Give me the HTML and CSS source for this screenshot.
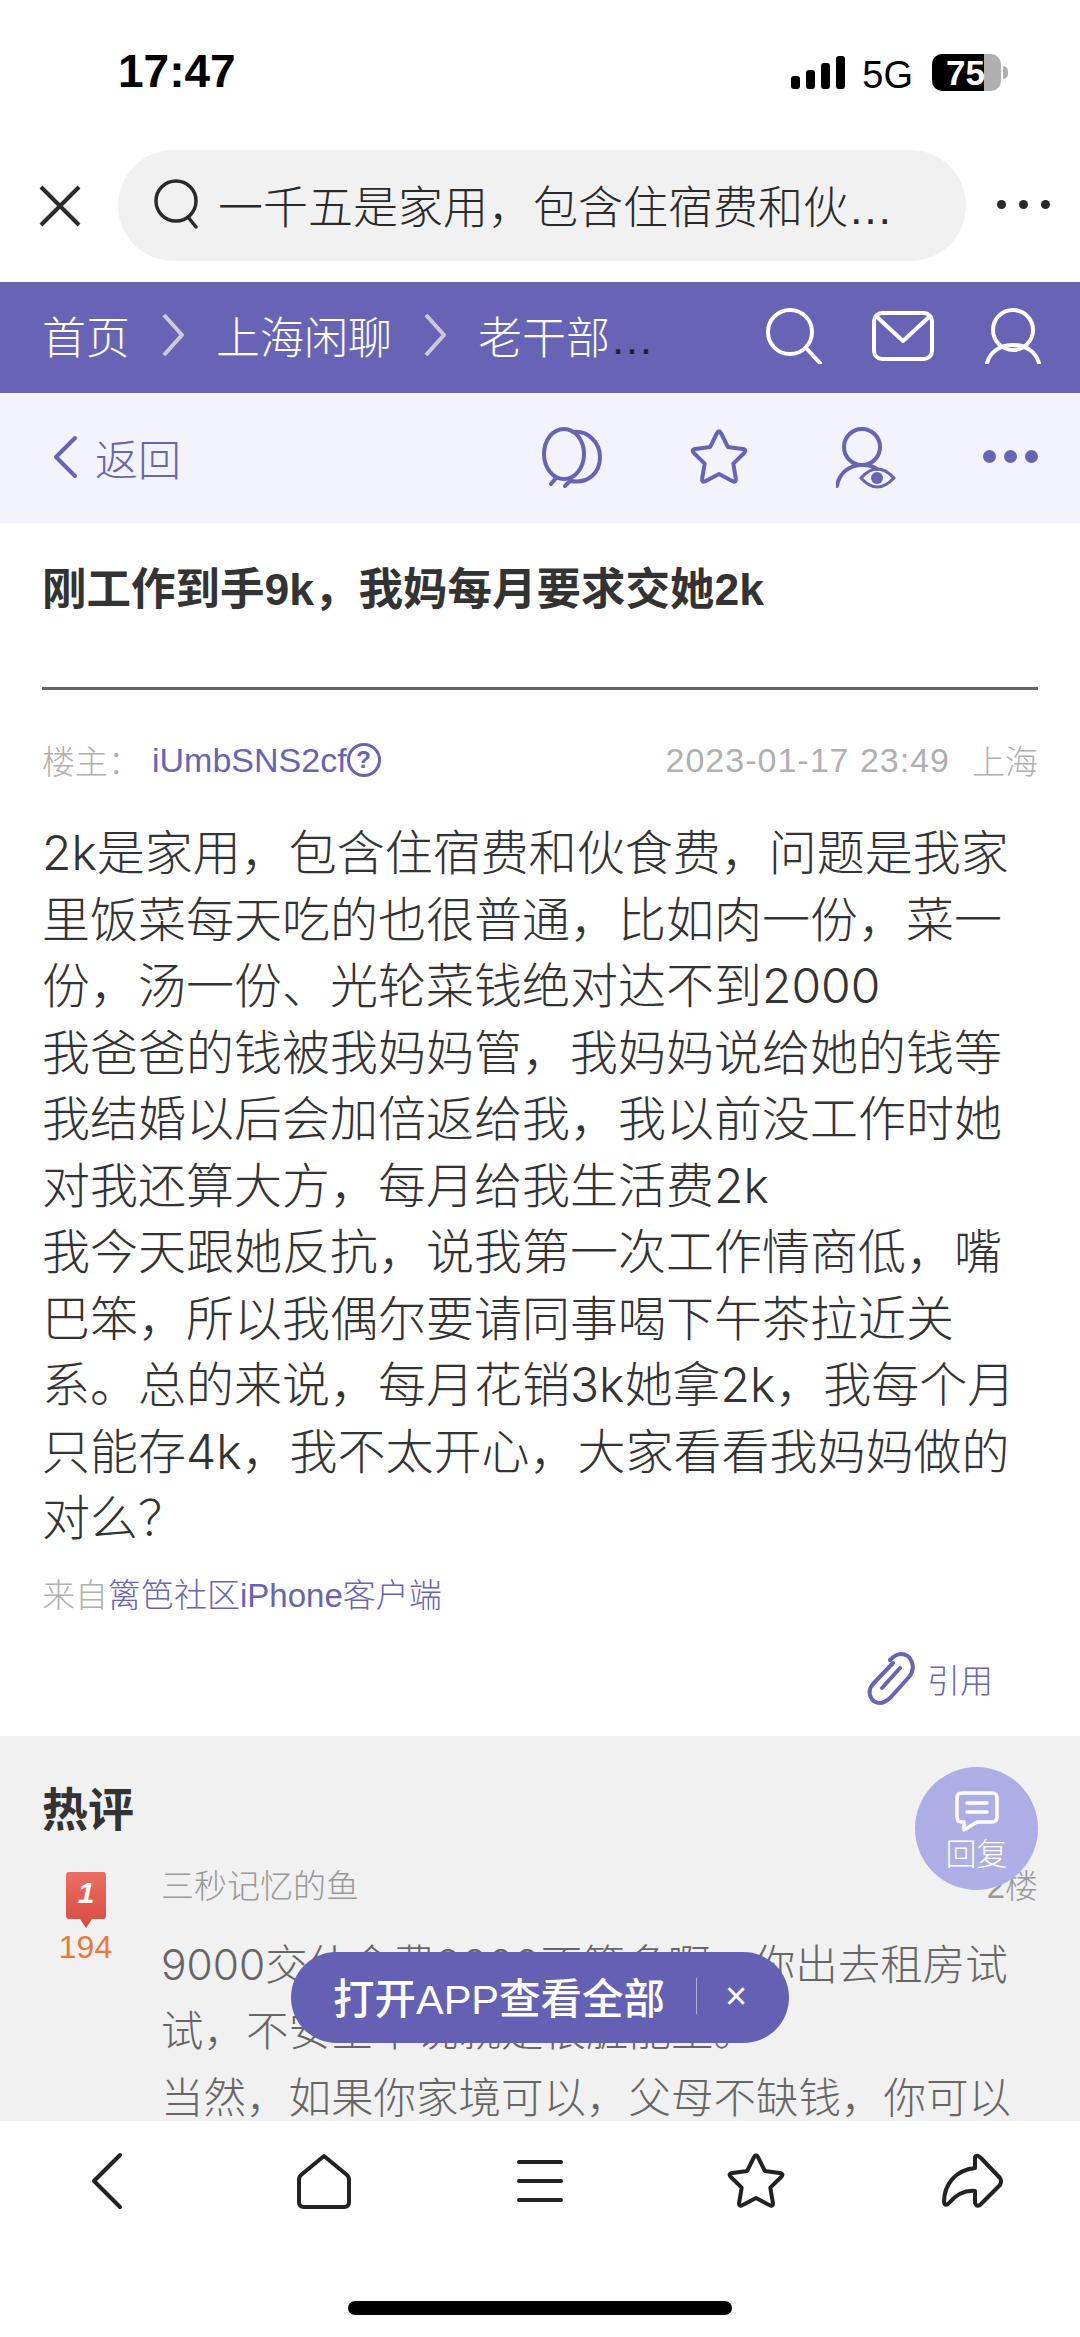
FILE: index.html
```html
<!DOCTYPE html>
<html lang="zh-CN">
<head>
    <meta charset="UTF-8">
    <meta name="viewport" content="width=device-width, initial-scale=1.0">
    <title>刚工作到手9k，我妈每月要求交她2k</title>
    <link rel="stylesheet" href="styles.css">
</head>
<body>

    <svg class="defs" width="0" height="0">
        <symbol id="star" viewBox="0 0 60 60">
            <path d="M27.8 6.5Q30 2 32.2 6.5L38.8 19.9 53.5 22Q58.5 22.7 54.9 26.2L44.3 36.6 46.8 51.4Q47.6 56.3 43.2 54L30 47 16.8 54Q12.4 56.3 13.2 51.4L15.7 36.6 5.1 26.2Q1.5 22.7 6.5 22L21.2 19.9Z"/>
        </symbol>
    </svg>

    <div class="page">

        <div class="status">
            <span class="time">17:47</span>
            <div class="status-right">
                <div class="signal">
                    <i class="bar1"></i><i class="bar2"></i><i class="bar3"></i><i class="bar4"></i>
                </div>
                <span class="net">5G</span>
                <div class="battery"><span>75</span></div>
                <i class="nub"></i>
            </div>
        </div>

        <div class="browser">
            <svg class="close" width="44" height="44" viewBox="0 0 44 44"><path d="M3 3 41 41M41 3 3 41"/></svg>
            <div class="search">
                <svg width="46" height="50" viewBox="0 0 46 50"><circle cx="22" cy="22" r="20"/><path d="M34 38 42 48"/></svg>
                <span>一千五是家用，包含住宿费和伙…</span>
            </div>
            <div class="more"><i></i><i></i><i></i></div>
        </div>

        <div class="nav">
            <div class="crumbs">
                <span>首页</span>
                <svg class="chev" width="24" height="44" viewBox="0 0 24 44"><path d="M3 2 21 22 3 42"/></svg>
                <span>上海闲聊</span>
                <svg class="chev" width="24" height="44" viewBox="0 0 24 44"><path d="M3 2 21 22 3 42"/></svg>
                <span>老干部<em>…</em></span>
            </div>
            <div class="nav-icons">
                <svg width="56" height="56" viewBox="0 0 56 56"><circle cx="24" cy="24" r="22"/><path d="M40 40 54 55"/></svg>
                <svg width="62" height="50" viewBox="0 0 62 50"><rect x="2" y="2" width="58" height="46" rx="8"/><path d="M5 6 31 30 57 6"/></svg>
                <svg width="58" height="56" viewBox="0 0 58 56"><circle cx="29" cy="22" r="20"/><path d="M3 55C6 44 16 37 29 37S52 44 55 55"/></svg>
            </div>
        </div>

        <div class="subnav">
            <svg class="back-arrow" width="26" height="44" viewBox="0 0 26 44"><path d="M23 3 4 22 23 41"/></svg>
            <span class="back">返回</span>
            <div class="sub-icons">
                <svg width="62" height="64" viewBox="0 0 62 64"><ellipse cx="24" cy="29" rx="20" ry="25"/><path d="M33 7C48 5 60 18 60 32 60 48 48 59 31 56M16 53 11 59M30 56 25 61"/></svg>
                <svg class="star" width="60" height="60"><use href="#star"/></svg>
                <svg width="60" height="64" viewBox="0 0 60 64"><circle cx="26" cy="22" r="18"/><path d="M1 61C3 48 14 39 28 40 34 40 38 42 41 44"/><path class="thin" d="M25 53Q41 35 58 53 41 71 25 53Z"/><circle class="solid" cx="41" cy="53" r="6"/></svg>
                <div class="sub-dots"><i></i><i></i><i></i></div>
            </div>
        </div>

        <div class="post">
            <h1 class="post-title">刚工作到手9k，我妈每月要求交她2k</h1>
            <div class="meta">
                <span class="owner">楼主：</span>
                <span class="author">iUmbSNS2cf</span>
                <span class="help">?</span>
                <span class="date">2023-01-17 23:49</span>
                <span class="place">上海</span>
            </div>
            <p class="post-body">2k是家用，包含住宿费和伙食费，问题是我家<br>里饭菜每天吃的也很普通，比如肉一份，菜一<br>份，汤一份、光轮菜钱绝对达不到2000<br>我爸爸的钱被我妈妈管，我妈妈说给她的钱等<br>我结婚以后会加倍返给我，我以前没工作时她<br>对我还算大方，每月给我生活费2k<br>我今天跟她反抗，说我第一次工作情商低，嘴<br>巴笨，所以我偶尔要请同事喝下午茶拉近关<br>系。总的来说，每月花销3k她拿2k，我每个月<br>只能存4k，我不太开心，大家看看我妈妈做的<br>对么？</p>
            <div class="source">来自<span>篱笆社区iPhone客户端</span></div>
            <div class="quote">
                <svg width="54" height="56" viewBox="0 0 54 56"><path d="M30 12 10 33C3 41 8 52 17 52 22 52 25 49 28 46L46 26C54 16 48 3 38 3 33 3 30 6 27 9M37 17 19 37"/></svg>
                <span>引用</span>
            </div>
        </div>

        <div class="hot">
            <h2 class="hot-title">热评</h2>
            <div class="comment">
                <div class="rank">
                    <svg width="40" height="56" viewBox="0 0 40 56">
                        <defs>
                            <linearGradient id="rankFill" x1="0" y1="0" x2="0" y2="1">
                                <stop offset="0" stop-color="#ec6f66"/>
                                <stop offset="1" stop-color="#d64a3e"/>
                            </linearGradient>
                        </defs>
                        <path d="M3 0H37Q40 0 40 3V44Q40 47 37 47H26L20 56 14 47H3Q0 47 0 44V3Q0 0 3 0Z" fill="url(#rankFill)"/>
                        <text x="20" y="31" text-anchor="middle">1</text>
                    </svg>
                    <span class="rank-count">194</span>
                </div>
                <div class="comment-main">
                    <div class="comment-head">
                        <span>三秒记忆的鱼</span>
                        <span>2楼</span>
                    </div>
                    <p class="comment-text">9000交伙食费2000不算多啊，你出去租房试<br>试，不安全不说就是很脏能生。<br>当然，如果你家境可以，父母不缺钱，你可以</p>
                </div>
            </div>
        </div>

        <div class="toolbar">
            <div class="tool-icons">
                <svg width="36" height="60" viewBox="0 0 36 60"><path d="M30 4 4 30 30 56"/></svg>
                <svg width="56" height="56" viewBox="0 0 56 56"><path d="M28 3 5 22Q3 24 3 26V49Q3 54 8 54H48Q53 54 53 49V26Q53 24 51 22Z"/></svg>
                <svg width="48" height="44" viewBox="0 0 48 44"><path d="M3 3H45M3 22H45M3 41H45"/></svg>
                <svg class="star" width="60" height="60"><use href="#star"/></svg>
                <svg width="62" height="56" viewBox="0 0 62 56"><path d="M34 4V15C14 17 3 32 3 49Q4 54 8 50C15 42 24 37 34 38V50Q36 55 40 51L59 32Q61 28 59 25L40 5Q36 1 34 4Z"/></svg>
            </div>
            <div class="home-bar"></div>
        </div>

        <div class="reply">
            <svg width="44" height="42" viewBox="0 0 44 42"><path d="M7 2H37Q42 2 42 7V26Q42 31 37 31H22L9 39V31H7Q2 31 2 26V7Q2 2 7 2ZM12 12H32M12 21H32"/></svg>
            <span>回复</span>
        </div>

        <div class="app-pill">
            <span class="app-text">打开APP查看全部</span>
            <i class="app-line"></i>
            <span class="app-close">×</span>
        </div>

    </div>

</body>
</html>
```

FILE: styles.css
```css
* {
    box-sizing: border-box;
}

body {
    margin: 0;
    font-family: "Liberation Sans", "Noto Sans CJK SC", sans-serif;
    font-weight: 300;
    background-color: white;
    color: #333;
}

.defs {
    position: absolute;
}

.page {
    position: relative;
    width: 1080px;
    height: 2337px;
    overflow: hidden;
    display: flex;
    flex-direction: column;
}

svg {
    fill: none;
    stroke: currentColor;
    stroke-linecap: round;
    stroke-linejoin: round;
    display: block;
    flex-shrink: 0;
}

/* status bar */
.status {
    height: 148px;
    padding: 50px 0 0 118px;
    display: flex;
    justify-content: space-between;
    color: black;
}

.time {
    margin-top: -1px;
    font-size: 46px;
    font-weight: bold;
    line-height: 44px;
}

.status-right {
    height: 44px;
    padding-right: 72px;
    display: flex;
    align-items: center;
}

.signal {
    display: flex;
    align-items: flex-end;
    gap: 6px;
    height: 33px;
    margin: 0 17px 0 0;
}

.signal i {
    width: 9px;
    border-radius: 3px;
    background: black;
}

.bar1 { height: 13px; }
.bar2 { height: 19px; }
.bar3 { height: 26px; }
.bar4 { height: 33px; }

.net {
    font-size: 38px;
    font-weight: 400;
    line-height: 44px;
    margin: 6px 19px 0 0;
}

.battery {
    width: 69px;
    height: 37px;
    border-radius: 10px;
    background: linear-gradient(to right, black 52px, #b0b0b0 52px);
    color: white;
    font-size: 35px;
    font-weight: bold;
    line-height: 37px;
    padding-left: 14px;
}

.nub {
    width: 5px;
    height: 13px;
    margin-left: 2px;
    border-radius: 0 6px 6px 0;
    background: #b0b0b0;
}

/* browser bar */
.browser {
    height: 134px;
    display: flex;
    align-items: flex-start;
    padding-left: 38px;
    color: #2a2a2a;
}

.close {
    margin: 36px 36px 0 0;
    stroke-width: 4;
    stroke-linecap: butt;
}

.search {
    width: 848px;
    height: 111px;
    margin-top: 2px;
    padding: 0 0 3px 36px;
    border-radius: 56px;
    background: #f1f1f1;
    display: flex;
    align-items: center;
    gap: 18px;
}

.search svg {
    stroke-width: 3.5;
}

.search span {
    font-size: 45px;
    white-space: nowrap;
}

.more {
    display: flex;
    gap: 13px;
    margin: 52px 0 0 31px;
}

.more i {
    width: 9px;
    height: 9px;
    border-radius: 50%;
    background: #2a2a2a;
}

/* purple bars */
.nav {
    height: 111px;
    padding: 0 38px 3px 42px;
    background: #6764b5;
    color: white;
    display: flex;
    align-items: center;
    justify-content: space-between;
}

.crumbs {
    display: flex;
    align-items: center;
    gap: 31px;
    margin-bottom: 2px;
    font-size: 44px;
}

.crumbs em {
    font-style: normal;
    color: #1d1d3a;
}

.chev {
    color: #ccccd8;
    stroke-width: 4;
    stroke-linecap: butt;
}

.nav-icons {
    display: flex;
    align-items: center;
    gap: 50px;
}

.nav-icons svg {
    stroke-width: 4;
}

.subnav {
    height: 130px;
    padding: 0 42px 3px 52px;
    background: #f2f3fd;
    color: #6764b5;
    display: flex;
    align-items: center;
}

.back-arrow {
    stroke-width: 4;
}

.back {
    margin-left: 17px;
    font-size: 43px;
}

.sub-icons {
    margin-left: auto;
    display: flex;
    align-items: center;
    gap: 87px;
}

.sub-icons svg {
    stroke-width: 4;
}

.sub-icons .thin {
    stroke-width: 3;
}

.sub-icons .solid {
    fill: currentColor;
    stroke: none;
}

.sub-dots {
    display: flex;
    gap: 8px;
}

.sub-dots i {
    width: 13px;
    height: 13px;
    border-radius: 50%;
    background: #6764b5;
}

.star {
    stroke-width: 4;
}

/* post */
.post {
    padding: 37px 42px 37px;
}

.post-title {
    margin: 0;
    height: 130px;
    font-size: 44.5px;
    line-height: 60px;
    font-weight: bold;
    border-bottom: 3px solid #666;
}

.meta {
    margin-top: 50px;
    height: 40px;
    display: flex;
    align-items: center;
    font-size: 33px;
    color: #b0b0b0;
}

.author {
    margin-left: 11px;
    font-size: 34px;
    color: #6764b5;
}

.help {
    width: 34px;
    height: 34px;
    border: 3px solid #6764b5;
    border-radius: 50%;
    color: #6764b5;
    font-size: 24px;
    font-weight: bold;
    line-height: 28px;
    text-align: center;
}

.date {
    margin-left: auto;
    font-size: 34px;
    letter-spacing: 1px;
}

.place {
    margin-left: 22px;
}

.post-body {
    margin: 40px 0 0;
    font-family: Inter, "Noto Sans CJK SC", sans-serif;
    font-size: 48px;
    line-height: 66.5px;
    white-space: nowrap;
}

.source {
    margin-top: 24px;
    font-size: 33px;
    line-height: 40px;
    color: #b0b0b0;
}

.source span {
    color: #6764b5;
}

.quote {
    margin-top: 43px;
    padding-right: 45px;
    height: 40px;
    display: flex;
    justify-content: flex-end;
    align-items: center;
    gap: 10px;
    font-size: 33px;
    color: #6764b5;
}

.quote svg {
    stroke-width: 4;
}

/* hot comments */
.hot {
    flex: none;
    height: 385px;
    padding: 44px 42px 0;
    background: #f1f1f1;
    overflow: hidden;
}

.hot-title {
    margin: 0;
    font-size: 46px;
    line-height: 60px;
}

.comment {
    margin-top: 27px;
    display: flex;
    gap: 32px;
}

.rank {
    flex: none;
    width: 87px;
    padding-top: 5px;
    display: flex;
    flex-direction: column;
    align-items: center;
}

.rank svg {
    stroke: none;
}

.rank text {
    fill: white;
    font-size: 30px;
    font-weight: bold;
    font-style: italic;
}

.rank-count {
    font-size: 32px;
    line-height: 38px;
    color: #e8793e;
}

.comment-main {
    flex: 1;
}

.comment-head {
    display: flex;
    justify-content: space-between;
    font-size: 33px;
    line-height: 40px;
    color: #999;
}

.comment-text {
    margin: 25px 0 0;
    font-family: Inter, "Noto Sans CJK SC", sans-serif;
    font-size: 42.5px;
    line-height: 66.5px;
    color: #666;
    white-space: nowrap;
}

/* bottom toolbar */
.toolbar {
    flex: 1;
    background: white;
    color: #222;
}

.tool-icons {
    display: grid;
    grid-template-columns: repeat(5, 216px);
    justify-items: center;
    align-items: center;
    height: 120px;
}

.tool-icons svg {
    stroke-width: 4;
}

.home-bar {
    width: 384px;
    height: 14px;
    margin: 60px auto 0;
    border-radius: 7px;
    background: black;
}

/* things floating over the page */
.reply {
    position: absolute;
    left: 915px;
    top: 1767px;
    width: 123px;
    height: 123px;
    border-radius: 50%;
    background: #aeaee6;
    color: white;
    display: flex;
    flex-direction: column;
    align-items: center;
    padding-top: 24px;
}

.reply svg {
    stroke-width: 3.5;
}

.reply span {
    font-size: 31px;
    line-height: 40px;
    margin-top: 2px;
}

.app-pill {
    position: absolute;
    left: 291px;
    top: 1952px;
    width: 498px;
    height: 91px;
    padding: 0 0 3px 42px;
    border-radius: 46px;
    background: #6461b4;
    color: white;
    display: flex;
    align-items: center;
}

.app-text {
    font-size: 41.5px;
    font-weight: 500;
    white-space: nowrap;
}

.app-line {
    width: 1px;
    height: 36px;
    margin-left: 31px;
    background: rgba(255, 255, 255, 0.5);
}

.app-close {
    margin-left: 28px;
    font-size: 38px;
}
```
